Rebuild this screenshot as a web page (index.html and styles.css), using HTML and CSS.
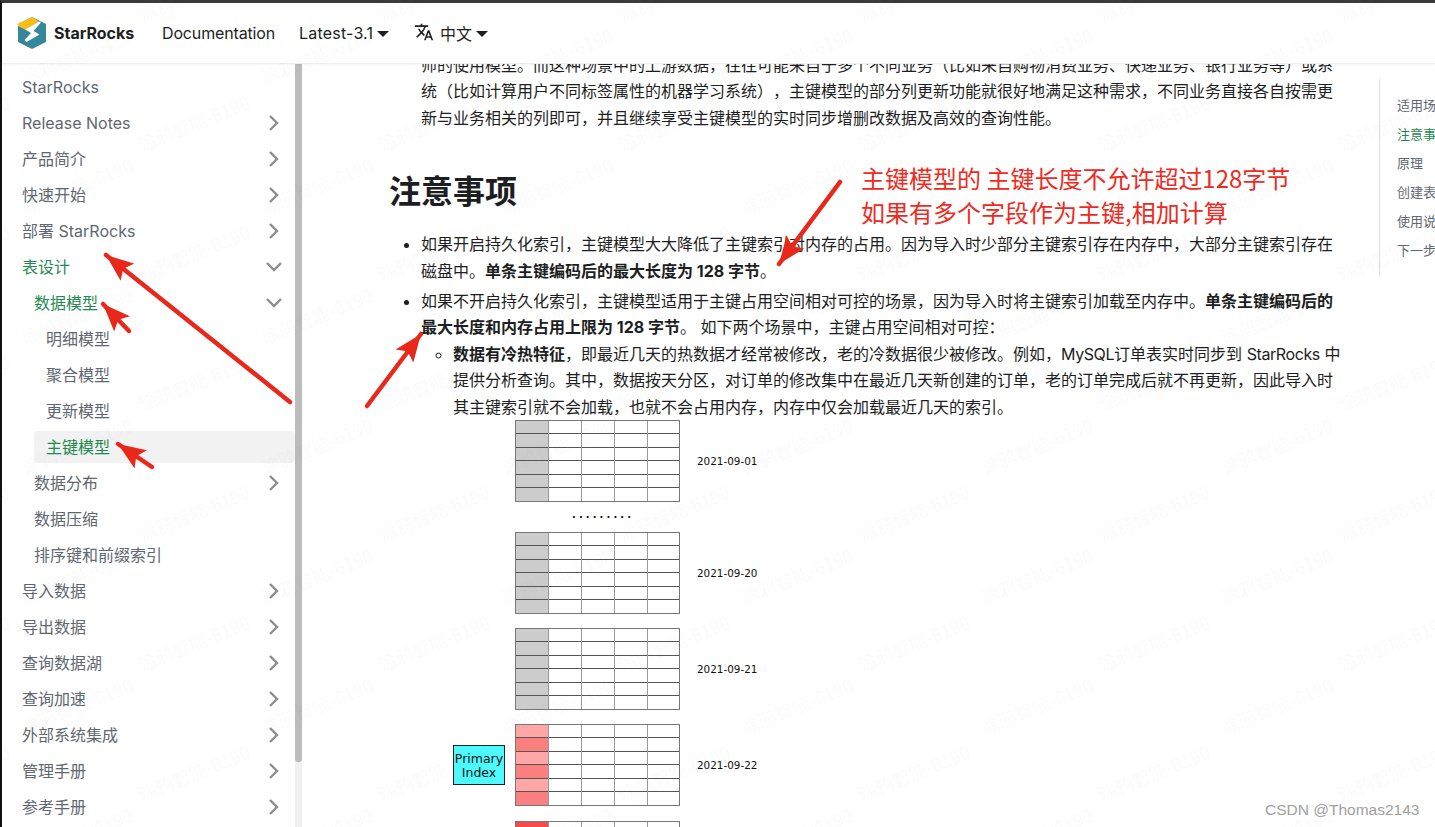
FILE: index.html
```html
<!DOCTYPE html>
<html lang="zh-CN">
<head>
  <meta charset="UTF-8" />
  <meta name="viewport" content="width=device-width, initial-scale=1.0" />
  <title>主键模型 | StarRocks</title>
  <link rel="stylesheet" href="styles.css">
</head>
<body>
  <div class="page">
    <header class="navbar">
      <a class="brand">
        <svg class="logo" viewBox="18 17 28 32" width="28" height="32">
          <polygon fill="#35879a" points="32,17 46,24 46,42 32,49 18,42 18,24" />
          <polygon fill="#f9be0f" points="18,24 32,17 39,21.5 25,29.5 18,26" />
          <polygon fill="#fff" points="39,21.5 25,29.5 31,33 24.5,40 26.5,42 39.5,34.5 33.5,31 41,22.5" />
        </svg>
        <span>StarRocks</span>
      </a>
      <a class="nav-link docs">Documentation</a>
      <a class="nav-link version">Latest-3.1<i class="caret"></i></a>
      <a class="nav-link lang">
        <svg class="translate" viewBox="0 0 24 24" width="20" height="20">
          <path fill="#1c1e21" d="M12.87 15.07l-2.54-2.51.03-.03c1.74-1.94 2.98-4.17 3.71-6.53H17V4h-7V2H8v2H1v1.99h11.17C11.5 7.92 10.44 9.75 9 11.35 8.07 10.32 7.3 9.19 6.69 8h-2c.73 1.63 1.73 3.17 2.98 4.56l-5.09 5.02L4 19l5-5 3.11 3.11.76-2.04zM18.5 10h-2L12 22h2l1.12-3h4.75L21 22h2l-4.5-12zm-2.62 7l1.62-4.33L19.12 17h-3.24z" />
        </svg>
        中文<i class="caret"></i>
      </a>
    </header>

    <div class="layout">
      <aside class="sidebar">
        <nav class="menu">
          <a class="item latin">StarRocks</a>
          <a class="item latin">Release Notes<svg class="chev" viewBox="0 0 12 18"><path d="M2 2l7 7-7 7" /></svg></a>
          <a class="item">产品简介<svg class="chev" viewBox="0 0 12 18"><path d="M2 2l7 7-7 7" /></svg></a>
          <a class="item">快速开始<svg class="chev" viewBox="0 0 12 18"><path d="M2 2l7 7-7 7" /></svg></a>
          <a class="item">部署 StarRocks<svg class="chev" viewBox="0 0 12 18"><path d="M2 2l7 7-7 7" /></svg></a>
          <a class="item green">表设计<svg class="chev down" viewBox="0 0 18 12"><path d="M2 2l7 7 7-7" /></svg></a>
          <a class="item sub green">数据模型<svg class="chev down" viewBox="0 0 18 12"><path d="M2 2l7 7 7-7" /></svg></a>
          <a class="item leaf">明细模型</a>
          <a class="item leaf">聚合模型</a>
          <a class="item leaf">更新模型</a>
          <a class="item leaf green active">主键模型</a>
          <a class="item sub">数据分布<svg class="chev" viewBox="0 0 12 18"><path d="M2 2l7 7-7 7" /></svg></a>
          <a class="item sub">数据压缩</a>
          <a class="item sub">排序键和前缀索引</a>
          <a class="item">导入数据<svg class="chev" viewBox="0 0 12 18"><path d="M2 2l7 7-7 7" /></svg></a>
          <a class="item">导出数据<svg class="chev" viewBox="0 0 12 18"><path d="M2 2l7 7-7 7" /></svg></a>
          <a class="item">查询数据湖<svg class="chev" viewBox="0 0 12 18"><path d="M2 2l7 7-7 7" /></svg></a>
          <a class="item">查询加速<svg class="chev" viewBox="0 0 12 18"><path d="M2 2l7 7-7 7" /></svg></a>
          <a class="item">外部系统集成<svg class="chev" viewBox="0 0 12 18"><path d="M2 2l7 7-7 7" /></svg></a>
          <a class="item">管理手册<svg class="chev" viewBox="0 0 12 18"><path d="M2 2l7 7-7 7" /></svg></a>
          <a class="item">参考手册<svg class="chev" viewBox="0 0 12 18"><path d="M2 2l7 7-7 7" /></svg></a>
        </nav>
        <div class="scrollbar"><div class="thumb"></div></div>
      </aside>

      <main class="content">
        <article class="doc">
          <p class="lead">师的使用模型。而这种场景中的上游数据，往往可能来自于多个不同业务（比如来自购物消费业务、快递业务、银行业务等）或系统（比如计算用户不同标签属性的机器学习系统），主键模型的部分列更新功能就很好地满足这种需求，不同业务直接各自按需更新与业务相关的列即可，并且继续享受主键模型的实时同步增删改数据及高效的查询性能。</p>
          <h2>注意事项</h2>
          <ul class="notes">
            <li>如果开启持久化索引，主键模型大大降低了主键索引对内存的占用。因为导入时少部分主键索引存在内存中，大部分主键索引存在磁盘中。<b>单条主键编码后的最大长度为 128 字节</b>。</li>
            <li>如果不开启持久化索引，主键模型适用于主键占用空间相对可控的场景，因为导入时将主键索引加载至内存中。<b>单条主键编码后的最大长度和内存占用上限为 128 字节</b>。 如下两个场景中，主键占用空间相对可控：
              <ul class="nested">
                <li><b>数据有冷热特征</b>，即最近几天的热数据才经常被修改，老的冷数据很少被修改。例如，<span class="en">MySQL</span>订单表实时同步到 <span class="en">StarRocks</span> 中提供分析查询。其中，数据按天分区，对订单的修改集中在最近几天新创建的订单，老的订单完成后就不再更新，因此导入时其主键索引就不会加载，也就不会占用内存，内存中仅会加载最近几天的索引。
                  <div class="figure">
                    <div class="fig-row">
                      <div class="tbl"></div>
                      <span class="date">2021-09-01</span>
                    </div>
                    <div class="dots">.........</div>
                    <div class="fig-row">
                      <div class="tbl"></div>
                      <span class="date">2021-09-20</span>
                    </div>
                    <div class="fig-row">
                      <div class="tbl"></div>
                      <span class="date">2021-09-21</span>
                    </div>
                    <div class="fig-row">
                      <div class="index">Primary<br>Index</div>
                      <div class="tbl warm"></div>
                      <span class="date">2021-09-22</span>
                    </div>
                    <div class="fig-row last">
                      <div class="tbl hot"></div>
                    </div>
                  </div>
                </li>
              </ul>
            </li>
          </ul>
        </article>
        <nav class="toc">
          <a>适用场景</a>
          <a class="green">注意事项</a>
          <a>原理</a>
          <a>创建表</a>
          <a>使用说明</a>
          <a>下一步</a>
        </nav>
      </main>
    </div>

    <!-- watermark over the whole shot -->
    <svg class="overlay" width="1435" height="827">
      <defs>
        <pattern id="wm" width="240" height="130" patternUnits="userSpaceOnUse" patternTransform="translate(20 30)">
          <text class="wm-text" x="5" y="55" transform="rotate(-22 5 55)">涂鸦智能-6190</text>
          <text class="wm-text" x="122" y="122" transform="rotate(-22 122 122)">涂鸦智能-6190</text>
        </pattern>
        <marker id="head" viewBox="0 0 20 16" markerUnits="userSpaceOnUse" markerWidth="28" markerHeight="22" refX="20" refY="8" orient="auto">
          <path fill="#e9281c" d="M0 0L20 8L0 16L4 8z" />
        </marker>
      </defs>
      <rect width="1435" height="827" fill="url(#wm)" />
      <g class="arrows">
        <line x1="290" y1="402" x2="106" y2="255" marker-end="url(#head)" />
        <line x1="129" y1="331" x2="103" y2="304" marker-end="url(#head)" />
        <line x1="152" y1="467" x2="118" y2="444" marker-end="url(#head)" />
        <line x1="367" y1="406" x2="421" y2="334" marker-end="url(#head)" />
        <line x1="840" y1="182" x2="779" y2="264" marker-end="url(#head)" />
      </g>
    </svg>

    <div class="callout">
      <div>主键模型的 主键长度不允许超过128字节</div>
      <div>如果有多个字段作为主键,相加计算</div>
    </div>
    <div class="credit">CSDN @Thomas2143</div>
  </div>
</body>
</html>
```

FILE: styles.css
```css
* {
  box-sizing: border-box;
}

html, body {
  margin: 0;
  padding: 0;
  height: 100%;
  overflow: hidden;
}

body {
  font-family: 'Inter', 'Noto Sans CJK SC', sans-serif;
  font-size: 16px;
  color: #1c1e21;
  background: #fff;
  text-spacing-trim: space-all;
}

.page {
  position: relative;
  display: flex;
  flex-direction: column;
  width: 1435px;
  height: 827px;
  overflow: hidden;
  border-top: 3px solid #3a3a3a;
  border-left: 2px solid #111;
}

.green {
  color: #1f8a50 !important;
}

/* navbar */
.navbar {
  display: flex;
  align-items: center;
  height: 61px;
  padding: 0 0 1px 16px;
  flex-shrink: 0;
  border-bottom: 1px solid #eee;
  box-shadow: 0 1px 2px rgba(0,0,0,0.04);
  position: relative;
  z-index: 2;
  background: #fff;
}

.brand {
  display: flex;
  align-items: center;
  gap: 8px;
  font-weight: 700;
  width: 144px;
}

.logo {
  flex-shrink: 0;
}

.nav-link {
  display: flex;
  align-items: center;
}

.docs {
  width: 137px;
  letter-spacing: -0.15px;
}

.version {
  width: 115px;
  letter-spacing: 0.2px;
}

.translate {
  margin-right: 6px;
  transform: translateY(-1px);
}

.caret {
  display: inline-block;
  margin-left: 4px;
  border-top: 6px solid #1c1e21;
  border-left: 6px solid transparent;
  border-right: 6px solid transparent;
  transform: translateY(1px);
}

/* sidebar */
.layout {
  display: flex;
  flex: 1;
  min-height: 0;
}

.sidebar {
  display: flex;
  width: 300px;
  flex-shrink: 0;
  overflow: hidden;
}

.menu {
  width: 293px;
  padding-top: 4px;
  flex-shrink: 0;
}

.item {
  display: flex;
  align-items: center;
  justify-content: space-between;
  height: 36px;
  padding: 0 16px 0 20px;
  color: #606770;
}

.latin {
  padding-top: 2px;
}

.sub {
  margin-left: 12px;
}

.leaf {
  margin-left: 32px;
  padding-left: 12px;
}

.active {
  height: 32px;
  margin: 3px 0 1px 32px;
  padding-bottom: 2px;
  background: #f2f2f2;
  border-radius: 4px;
}

.chev {
  width: 12px;
  height: 18px;
  margin-right: -1px;
  transform: translateY(1px);
}

.latin .chev {
  transform: none;
}

.chev.down {
  width: 18px;
  height: 12px;
  margin-right: -4px;
}

.chev path {
  fill: none;
  stroke: #8a8d91;
  stroke-width: 2.4;
}

.scrollbar {
  width: 7px;
  background: #f0f0f0;
}

.thumb {
  height: 698px;
  background: #bcbcbc;
  border-radius: 0 0 3px 3px;
}

/* doc body */
.content {
  display: flex;
  flex: 1;
  min-width: 0;
  overflow: hidden;
}

.doc {
  width: 955px;
  margin-left: 88px;
  margin-top: -12px;
  line-height: 26.4px;
  flex-shrink: 0;
}

.lead {
  margin: 0 0 0 31px;
}

h2 {
  margin: 41px 0 19px -1px;
  font-size: 32px;
  line-height: 40px;
  font-weight: 600;
}

.notes {
  margin: 0;
  padding-left: 31px;
}

.notes > li + li {
  margin-top: 4px;
}

.nested {
  margin: 0;
  padding-left: 32px;
  list-style: circle;
}

.en {
  letter-spacing: -0.4px;
}

b {
  font-weight: 700;
}

/* table picture */
.figure {
  display: flex;
  flex-direction: column;
  gap: 14px;
  font-family: 'DejaVu Sans', sans-serif;
}

.fig-row {
  position: relative;
  display: flex;
  align-items: center;
  margin-left: 62px;
}

.last {
  margin-top: 1px;
}

.tbl {
  width: 165px;
  height: 82px;
  flex-shrink: 0;
  border: 1px solid #777;
  background:
    repeating-linear-gradient(to right, transparent 0 32px, #999 32px 33px),
    repeating-linear-gradient(to bottom, transparent 0 12px, #555 12px 13px, transparent 13px 26px, #555 26px 27px),
    linear-gradient(to right, #ccc 0 32px, transparent 32px);
}

.warm {
  background:
    repeating-linear-gradient(to right, transparent 0 32px, #999 32px 33px),
    repeating-linear-gradient(to bottom, transparent 0 12px, #555 12px 13px, transparent 13px 26px, #555 26px 27px),
    linear-gradient(to right, transparent 32px, #fff 32px),
    repeating-linear-gradient(to bottom, #ffa6a6 0 13px, #fa7f7f 13px 27px);
}

.hot {
  background:
    repeating-linear-gradient(to right, transparent 0 32px, #999 32px 33px),
    repeating-linear-gradient(to bottom, transparent 0 12px, #555 12px 13px, transparent 13px 26px, #555 26px 27px),
    linear-gradient(to right, #f44c4c 0 32px, transparent 32px);
}

.date {
  margin-left: 17px;
  font-size: 10.4px;
  line-height: 12px;
  color: #111;
}

.dots {
  margin: -15px 0 -15px 119px;
  height: 32px;
  line-height: 28px;
  font-size: 10px;
  font-weight: 700;
  letter-spacing: 3.1px;
  color: #111;
}

.index {
  position: absolute;
  left: -62px;
  top: 21px;
  width: 52px;
  height: 40px;
  padding-top: 6px;
  border: 1px solid #222;
  background: #4dfbff;
  text-align: center;
  font-size: 12.5px;
  line-height: 14px;
  color: #111;
  white-space: nowrap;
}

/* right hand toc */
.toc {
  display: flex;
  flex-direction: column;
  gap: 9px;
  width: 100px;
  height: 198px;
  margin-top: 15px;
  margin-left: 34px;
  padding: 16px 0 0 17px;
  border-left: 1px solid #dadde1;
  flex-shrink: 0;
  font-size: 13px;
  line-height: 20px;
  color: #606770;
  white-space: nowrap;
}

/* annotations on top of the shot */
.overlay {
  position: absolute;
  left: -2px;
  top: -3px;
  z-index: 3;
  pointer-events: none;
}

.wm-text {
  font-family: 'Noto Sans CJK SC', sans-serif;
  font-size: 18px;
  fill: rgba(0,0,0,0.016);
}

.arrows line {
  stroke: #e9281c;
  stroke-width: 4.5;
  stroke-linecap: round;
}

.callout {
  position: absolute;
  left: 859px;
  top: 158px;
  z-index: 4;
  font-family: 'Noto Sans CJK SC', sans-serif;
  font-size: 24px;
  line-height: 34px;
  color: #f02a22;
  white-space: nowrap;
}

.credit {
  position: absolute;
  left: 1263px;
  top: 798px;
  z-index: 4;
  font-family: 'Liberation Sans', sans-serif;
  font-size: 15.5px;
  line-height: 18px;
  color: #a0a0a0;
}
```
